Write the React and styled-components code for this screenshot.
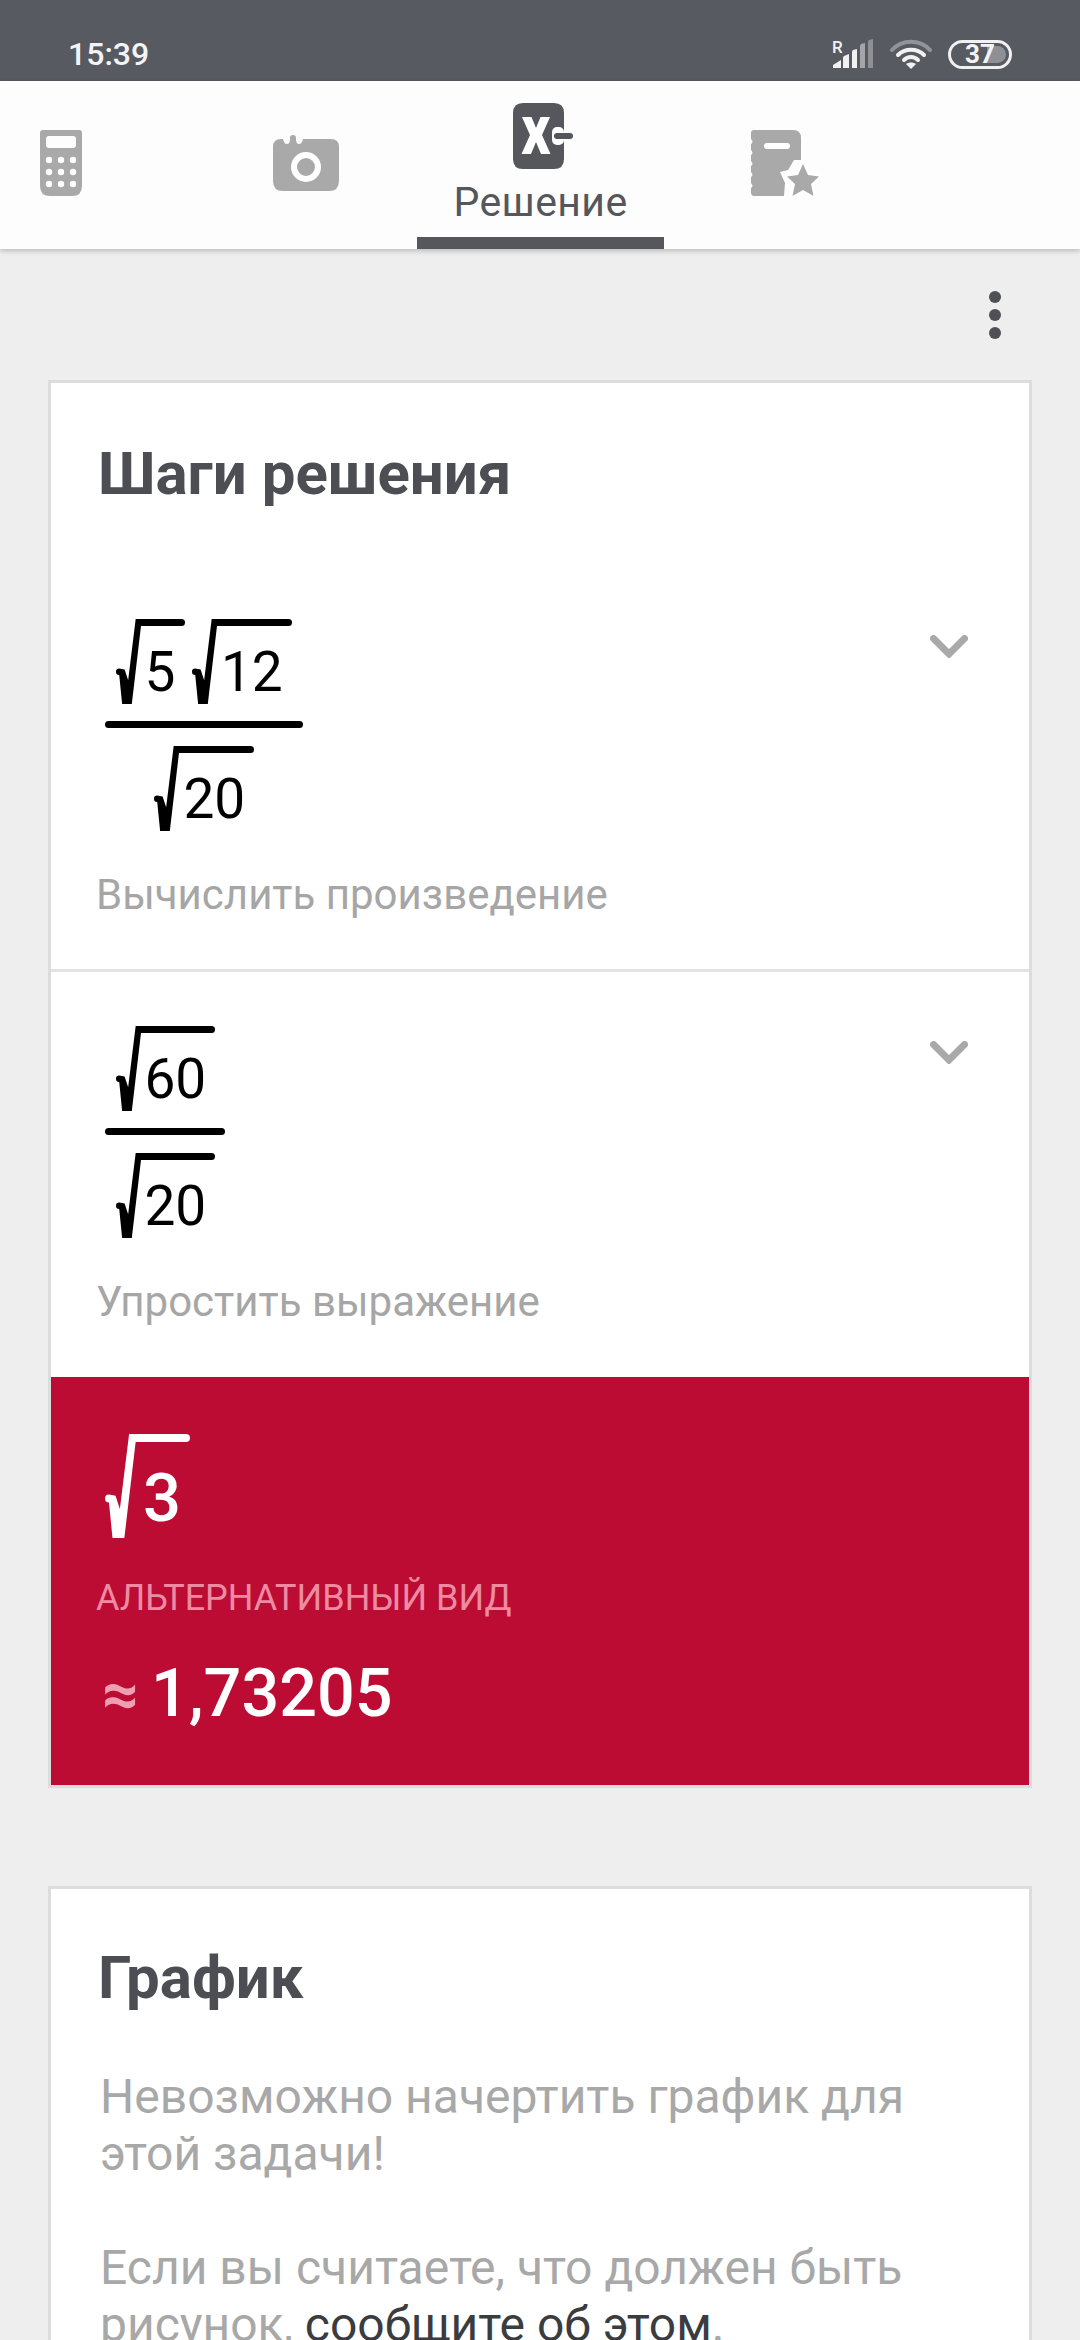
import React from 'react';
import styled, { createGlobalStyle } from 'styled-components';

const GlobalStyle = createGlobalStyle`
  html, body { margin: 0; padding: 0; background: #eeeeee; }
  * { box-sizing: border-box; }
`;

const Page = styled.div`
  width: 1080px;
  height: 2340px;
  overflow: hidden;
  background: #eeeeee;
  font-family: Roboto, "Noto Sans", sans-serif;
`;

const StatusBar = styled.div`
  height: 81px;
  background: #585a62;
  display: flex;
  align-items: flex-end;
  justify-content: space-between;
  padding: 0 68px 12px 68px;
  color: #f4f4f5;
`;

const Clock = styled.div`
  font-size: 32px;
  line-height: 30px;
  font-weight: 500;
`;

const StatusIcons = styled.div`
  display: flex;
  align-items: flex-end;
  gap: 16px;
`;

const Battery = styled.div`
  position: relative;
  width: 64px;
  height: 29px;
  border: 3px solid #f1f1f2;
  border-radius: 15px;
  display: flex;
  align-items: center;
  justify-content: center;
  overflow: hidden;
  font-size: 26px;
  font-weight: 700;
  line-height: 23px;
  &::before {
    content: '';
    position: absolute;
    top: 3px;
    bottom: 3px;
    left: 36px;
    right: 3px;
    border-radius: 0 9px 9px 0;
    background: #8f9095;
  }
  span { position: relative; }
`;

const Nav = styled.nav`
  height: 168px;
  background: #fdfdfd;
  display: flex;
  box-shadow: 0 2px 5px rgba(0, 0, 0, 0.22);
  position: relative;
`;

const Tab = styled.div`
  width: ${(p) => p.$width}px;
  margin-left: ${(p) => p.$offset || 0}px;
  display: flex;
  flex-direction: column;
  align-items: center;
  justify-content: ${(p) => (p.$active ? 'flex-start' : 'center')};
  padding-top: ${(p) => (p.$active ? 22 : 0)}px;
  padding-bottom: ${(p) => (p.$active ? 0 : 4)}px;
  border-bottom: ${(p) => (p.$active ? '12px solid #55575c' : 'none')};
`;

const ActiveIcon = styled.svg`
  display: block;
  flex: none;
  margin-left: 5px;
`;

const TabLabel = styled.div`
  font-size: 41px;
  line-height: 48px;
  color: #55575c;
  margin-top: 9px;
  letter-spacing: 0.4px;
`;

const Toolbar = styled.div`
  height: 131px;
  padding: 42px 79px 0 0;
  display: flex;
  justify-content: flex-end;
`;

const Dots = styled.div`
  display: flex;
  flex-direction: column;
  gap: 6px;
  i {
    display: block;
    width: 12px;
    height: 12px;
    border-radius: 50%;
    background: #4e5056;
  }
`;

const Card = styled.section`
  margin: 0 48px;
  background: #fff;
  border: 3px solid #dcdcdc;
  margin-bottom: ${(p) => p.$gap || 0}px;
`;

const CardTitle = styled.h2`
  margin: 0;
  padding: ${(p) => p.$top}px 0 0 47px;
  font-size: 60px;
  line-height: 66px;
  font-weight: 700;
  color: #4c4e54;
`;

const Step = styled.div`
  display: flex;
  justify-content: space-between;
  height: ${(p) => p.$height}px;
  padding: ${(p) => p.$top}px 61px 0 54px;
  border-bottom: ${(p) => (p.$divider ? '3px solid #e3e3e3' : 'none')};
`;

const StepBody = styled.div`
  display: flex;
  flex-direction: column;
`;

const Fraction = styled.div`
  display: inline-flex;
  flex-direction: column;
  align-items: flex-start;
  width: ${(p) => p.$width}px;
`;

const Line = styled.div`
  align-self: stretch;
  height: 7px;
  border-radius: 4px;
  background: #000;
  margin: 17px 0 18px;
`;

const Numer = styled.div`
  display: flex;
  gap: ${(p) => p.$gap || 0}px;
  padding-left: ${(p) => p.$indent}px;
`;

const Root = styled.div`
  display: flex;
  align-items: flex-start;
  color: ${(p) => p.$color};
`;

const RootSign = styled.svg`
  display: block;
  flex: none;
  fill: currentColor;
`;

const RootBody = styled.div`
  margin-left: ${(p) => p.$overlap}px;
  width: ${(p) => p.$width}px;
  display: flex;
  flex-direction: column;
`;

const RootBar = styled.div`
  height: ${(p) => p.$thick}px;
  border-radius: 0 4px 4px 0;
  background: currentColor;
`;

const RootDigits = styled.div`
  font-size: ${(p) => p.$size}px;
  font-weight: ${(p) => p.$weight};
  line-height: ${(p) => p.$size}px;
  padding: ${(p) => p.$pad};
  white-space: nowrap;
`;

const Hint = styled.div`
  font-size: 42px;
  line-height: 48px;
  color: #a6a6a6;
  margin: 40px 0 0 -9px;
  white-space: nowrap;
`;

const Chevron = styled.svg`
  display: block;
  flex: none;
  margin-top: ${(p) => p.$top}px;
  stroke: #a9a9a9;
  stroke-width: 7;
  stroke-linecap: round;
  fill: none;
`;

const Answer = styled.div`
  height: 408px;
  background: #bd0c34;
  padding: 57px 0 0 54px;
`;

const AltLabel = styled.div`
  font-size: 36px;
  line-height: 44px;
  color: #ec8ba2;
  margin: 38px 0 0 -9px;
  white-space: nowrap;
`;

const Approx = styled.div`
  display: flex;
  align-items: baseline;
  margin: 34px 0 0 -3px;
  font-size: 66.5px;
  line-height: 78px;
  font-weight: 500;
  color: #fff;
  span {
    color: #ee9fb2;
    font-size: 64px;
    font-weight: 700;
    margin-right: 12px;
  }
`;

const GraphBody = styled.p`
  margin: 57px 50px 0 49px;
  font-size: 48px;
  line-height: 57px;
  color: #a8a8a8;
  a { color: #3a3c40; text-decoration: none; }
`;

function Radical({ h, bar, thick = 7, color = '#000', size, weight = 400, pad, children }) {
  const k = h / 79;
  return (
    <Root $color={color}>
      <RootSign width={24 * k} height={h} viewBox="0 0 24 79">
        <path d="M18.3 0H24L14.7 79H5.7L3 52A3 3 0 0 1 3 46L8 47L11.3 57Z" />
      </RootSign>
      <RootBody $overlap={-5 * k} $width={bar}>
        <RootBar $thick={thick} />
        <RootDigits $size={size} $weight={weight} $pad={pad}>{children}</RootDigits>
      </RootBody>
    </Root>
  );
}

function ChevronDown({ top }) {
  return (
    <Chevron $top={top} width="38" height="23" viewBox="0 0 38 23">
      <path d="M3.500 3.500L19 19L34.500 3.500" />
    </Chevron>
  );
}

export default function App() {
  return (
    <Page>
      <GlobalStyle />
      <StatusBar>
        <Clock>15:39</Clock>
        <StatusIcons>
          <svg width="42" height="30" viewBox="0 0 42 30">
            <text x="0" y="14" fontSize="17" fontWeight="500" fill="#f1f1f2" fontFamily="Roboto, sans-serif">R</text>
            <path d="M1 29V26L9 21V29Z" fill="#f1f1f2" />
            <path d="M11 29V19Q11 18 12 17L17 15V29Z" fill="#f1f1f2" />
            <path d="M20 29V13Q20 12 21 11L25 10V29Z" fill="#f1f1f2" />
            <path d="M28 29V7Q28 6 29 5L33 4V29Z" fill="#a4a5a9" />
            <path d="M36 29V3Q36 2 37 1L41 0V29Z" fill="#8f9095" />
          </svg>
          <svg width="42" height="30" viewBox="0 0 42 30" fill="none" strokeLinecap="round">
            <path d="M2 11C12 0 30 0 40 11" stroke="#93949a" strokeWidth="4" />
            <path d="M8 16C15 9 27 9 34 16" stroke="#f1f1f2" strokeWidth="4" />
            <path d="M14 21C18 17 24 17 28 21" stroke="#f1f1f2" strokeWidth="4" />
            <path d="M21 30L16 25C19 23 23 23 26 25Z" fill="#f1f1f2" />
          </svg>
          <Battery><span>37</span></Battery>
        </StatusIcons>
      </StatusBar>

      <Nav>
        <Tab $width={122}>
          <svg width="42" height="66" viewBox="0 0 42 66">
            <path fillRule="evenodd" fill="#a9a9a9" d="M3 0H39Q42 0 42 3V56Q42 66 32 66H10Q0 66 0 56V3Q0 0 3 0ZM9 6Q6 6 6 9V15Q6 18 9 18H33Q36 18 36 15V9Q36 6 33 6Z" />
            {[30, 42, 54].map((y) => [9, 21, 33].map((x) => (
              <circle key={`${x}-${y}`} cx={x} cy={y} r="3.2" fill="#fff" />
            )))}
          </svg>
        </Tab>
        <Tab $width={222} $offset={73}>
          <svg width="66" height="56" viewBox="0 0 66 56">
            <path fill="#a9a9a9" d="M8 4H10Q11 9 14 9Q17 9 17 4V3Q17 0 20 0Q23 0 23 3V4Q23 9 26 9Q29 9 30 4H58Q66 4 66 12V46Q66 56 56 56H10Q0 56 0 46V12Q0 4 8 4Z" />
            <circle cx="33" cy="32" r="12" fill="#a9a9a9" stroke="#fff" strokeWidth="6" />
          </svg>
        </Tab>
        <Tab $width={247} $active>
          <ActiveIcon width="60" height="66" viewBox="0 0 60 66">
            <path fill="#55575c" d="M10 0H41Q51 0 51 10V56Q51 66 41 66H10Q0 66 0 56V10Q0 0 10 0Z" />
            <path fill="#fff" d="M9 14H18.500L23 25L27.500 14H37L29 32L37.500 51H28L23 39L18 51H8.500L17 32Z" />
            <rect x="39" y="24" width="12" height="18" rx="5" fill="#fff" />
            <path d="M44 33H57" stroke="#55575c" strokeWidth="6" strokeLinecap="round" />
          </ActiveIcon>
          <TabLabel>Решение</TabLabel>
        </Tab>
        <Tab $width={242}>
          <svg width="70" height="66" viewBox="0 0 70 66">
            <path fill="#a9a9a9" d="M4 0H43Q51 0 51 8V30H44L38 40L30 42L35 53L34 66H4Q1 66 1 62V58Q4 56 1 53V47Q4 45 1 42V36Q4 34 1 31V25Q4 23 1 20V14Q4 12 1 9V3Q1 0 4 0Z" />
            <rect x="14" y="13" width="26" height="6" rx="3" fill="#fff" />
            <path fill="#a9a9a9" stroke="#fff" strokeWidth="6" paintOrder="stroke" strokeLinejoin="round" d="M53 34L58 45L69 46.500L61 54L63.500 66L53 60L42.500 66L45 54L37 46.500L48 45Z" />
          </svg>
        </Tab>
      </Nav>

      <Toolbar>
        <Dots><i /><i /><i /></Dots>
      </Toolbar>

      <Card $gap={98}>
        <CardTitle $top={58}>Шаги решения</CardTitle>
        <Step $height={465} $top={112} $divider>
          <StepBody>
            <Fraction $width={198}>
              <Numer $indent={11} $gap={7}>
                <Radical h={85} bar={49} size={55} pad="19px 0 0 8px">5</Radical>
                <Radical h={85} bar={79} size={55} pad="19px 0 0 8px">12</Radical>
              </Numer>
              <Line />
              <Numer $indent={49}>
                <Radical h={85} bar={80} size={55} pad="19px 0 0 9px">20</Radical>
              </Numer>
            </Fraction>
            <Hint>Вычислить произведение</Hint>
          </StepBody>
          <ChevronDown top={16} />
        </Step>
        <Step $height={405} $top={54}>
          <StepBody>
            <Fraction $width={120}>
              <Numer $indent={11}>
                <Radical h={85} bar={79} size={55} pad="19px 0 0 8px">60</Radical>
              </Numer>
              <Line />
              <Numer $indent={11}>
                <Radical h={85} bar={79} size={55} pad="19px 0 0 8px">20</Radical>
              </Numer>
            </Fraction>
            <Hint>Упростить выражение</Hint>
          </StepBody>
          <ChevronDown top={15} />
        </Step>
        <Answer>
          <Radical h={104} bar={60} thick={8} color="#fff" size={67} weight={500} pad="23px 0 0 13px">3</Radical>
          <AltLabel>АЛЬТЕРНАТИВНЫЙ ВИД</AltLabel>
          <Approx><span>≈</span>1,73205</Approx>
        </Answer>
      </Card>

      <Card>
        <CardTitle $top={56}>График</CardTitle>
        <GraphBody>
          Невозможно начертить график для этой задачи!
          <br />
          <br />
          Если вы считаете, что должен быть рисунок, <a>сообщите об этом</a>.
        </GraphBody>
      </Card>
    </Page>
  );
}
